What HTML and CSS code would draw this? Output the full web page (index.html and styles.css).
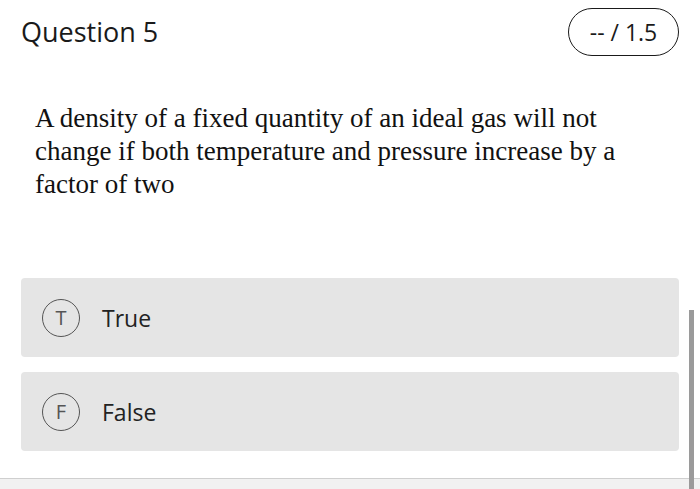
FILE: index.html
```html
<!DOCTYPE html>
<html>
<head>
<meta charset="utf-8">
<link rel="stylesheet" href="styles.css">
</head>
<body>
<div class="page">
  <header class="header">
    <h1 class="title">Question 5</h1>
    <div class="score">-- / 1.5</div>
  </header>
  <p class="question">A density of a fixed quantity of an ideal gas will not change if both temperature and pressure increase by a factor of two</p>
  <div class="options">
    <div class="option"><span class="badge">T</span><span class="label">True</span></div>
    <div class="option"><span class="badge">F</span><span class="label">False</span></div>
  </div>
  <div class="footer"></div>
  <div class="scrollbar"></div>
</div>
</body>
</html>
```
FILE: styles.css
```css
html, body {
  margin: 0;
  padding: 0;
  background: #ffffff;
}
.page {
  position: relative;
  width: 700px;
  height: 489px;
  overflow: hidden;
  font-family: "Open Sans", "Liberation Sans", sans-serif;
  color: #222222;
}
.header {
  display: flex;
  justify-content: space-between;
  align-items: center;
  padding: 8px 21px 0 21px;
}
.title {
  margin: 0;
  font-size: 27px;
  font-weight: 500;
  line-height: 48px;
  color: #1a1a1a;
}
.score {
  box-sizing: border-box;
  width: 111px;
  height: 48px;
  border: 1.5px solid #1a1a1a;
  border-radius: 24px;
  display: flex;
  align-items: center;
  justify-content: center;
  font-size: 23px;
  font-weight: 500;
  color: #1a1a1a;
}
.question {
  margin: 46px 60px 0 35px;
  font-family: "Liberation Serif", "Times New Roman", serif;
  font-size: 27px;
  line-height: 33px;
  color: #111111;
}
.options {
  display: flex;
  flex-direction: column;
  gap: 15px;
  margin: 77px 21px 0 21px;
}
.option {
  height: 79px;
  background: #e5e5e5;
  border-radius: 4px;
  display: flex;
  align-items: center;
  padding-left: 21px;
}
.badge {
  box-sizing: border-box;
  width: 38px;
  height: 38px;
  border: 1.3px solid #555555;
  border-radius: 50%;
  display: flex;
  align-items: center;
  justify-content: center;
  font-size: 20px;
  color: #555555;
}
.label {
  margin-left: 22px;
  font-size: 23px;
  color: #222222;
}
.footer {
  margin-top: 27px;
  height: 11px;
  border-top: 1px solid #cfcfcf;
  background: #f1f1f1;
}
.scrollbar {
  position: absolute;
  left: 689px;
  top: 310px;
  width: 5px;
  bottom: 0;
  background: #9a9a9a;
}
```
